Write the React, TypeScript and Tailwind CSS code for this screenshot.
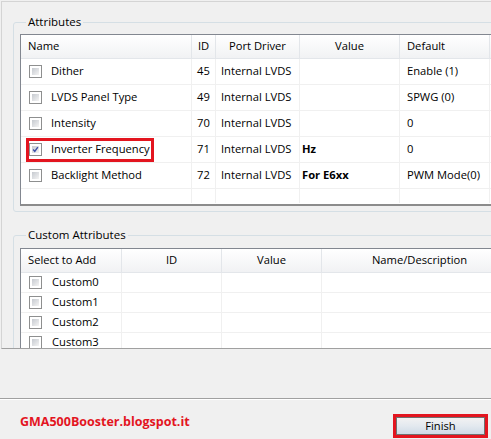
import React from 'react'

const attrs = [
  { name: 'Dither', id: '45', driver: 'Internal LVDS', value: '', def: 'Enable (1)', checked: false },
  { name: 'LVDS Panel Type', id: '49', driver: 'Internal LVDS', value: '', def: 'SPWG (0)', checked: false },
  { name: 'Intensity', id: '70', driver: 'Internal LVDS', value: '', def: '0', checked: false },
  { name: 'Inverter Frequency', id: '71', driver: 'Internal LVDS', value: 'Hz', def: '0', checked: true, marked: true },
  { name: 'Backlight Method', id: '72', driver: 'Internal LVDS', value: 'For E6xx', def: 'PWM Mode(0)', checked: false },
]

const customs = ['Custom0', 'Custom1', 'Custom2', 'Custom3']

function CheckBox({ checked }: { checked?: boolean }) {
  return (
    <div className="w-[13px] h-[13px] border border-[#8e8f8f] bg-white p-[2px] shrink-0">
      <div className="w-full h-full bg-linear-to-br from-[#c6cad0] to-[#f4f4f4] flex items-center justify-center">
        {checked && (
          <svg width="9" height="9" viewBox="0 0 9 9">
            <path d="M1.5 4.5 L3.6 7 L7.5 1.5" fill="none" stroke="#3c4fa8" strokeWidth="1.8" />
          </svg>
        )}
      </div>
    </div>
  )
}

function GroupBox({ title, className, children }: { title: string; className?: string; children: React.ReactNode }) {
  return (
    <fieldset className={`border border-[#d5dfe5] rounded-[3px] w-[600px] ${className ?? ''}`}>
      <legend className="ml-[6px] px-[2px] leading-[16px] text-[11.5px] text-black">{title}</legend>
      {children}
    </fieldset>
  )
}

function HeaderCell({ w, children, center }: { w: string; children?: React.ReactNode; center?: boolean }) {
  return (
    <div className={`${w} h-full border-r border-[#e3e6ea] flex items-center px-[7px] ${center ? 'justify-center' : ''}`}>
      {children}
    </div>
  )
}

export default function App() {
  return (
    <div className="w-[491px] h-[439px] bg-[#f0f0f0] overflow-hidden flex flex-col font-['Open_Sans',sans-serif] text-[11.2px] text-black">
      <div className="h-[348px] mt-[1px] ml-[1px] border-l border-t border-b border-[#d4d4d4] border-b-[#a0a0a0] overflow-hidden shrink-0">
        <GroupBox title="Attributes" className="mt-[12px] ml-[11px] pl-[6px] pt-[4px] pb-[5px]">
          <div className="w-[580px] h-[172px] bg-white border-t border-l border-[#828790] border-b-2 border-b-[#8c8c8c]">
            <div className="flex h-[24px] bg-linear-to-b from-white to-[#f1f2f4] border-b border-[#e3e6ea]">
              <HeaderCell w="w-[171px]">Name</HeaderCell>
              <HeaderCell w="w-[24px]" center>ID</HeaderCell>
              <HeaderCell w="w-[84px]" center>Port Driver</HeaderCell>
              <HeaderCell w="w-[100px]" center>Value</HeaderCell>
              <HeaderCell w="w-[90px]">Default</HeaderCell>
              <div className="flex-1" />
            </div>
            {attrs.map((a) => (
              <div key={a.id} className="flex h-[26px] border-b border-[#f0f0f0]">
                <div className="w-[171px] h-full border-r border-[#f0f0f0] flex items-center gap-[9px] pl-[8px] relative">
                  <CheckBox checked={a.checked} />
                  <span>{a.name}</span>
                  {a.marked && (
                    <div className="absolute left-[5px] top-[1px] w-[128px] h-[24px] border-[3px] border-[#e3151f]" />
                  )}
                </div>
                <div className="w-[24px] h-full border-r border-[#f0f0f0] flex items-center justify-center">{a.id}</div>
                <div className="w-[84px] h-full border-r border-[#f0f0f0] flex items-center pl-[5px]">{a.driver}</div>
                <div className="w-[100px] h-full border-r border-[#f0f0f0] flex items-center pl-[2px] font-bold">{a.value}</div>
                <div className="w-[90px] h-full border-r border-[#f0f0f0] flex items-center pl-[7px]">{a.def}</div>
                <div className="flex-1" />
              </div>
            ))}
            <div className="flex h-[14px]">
              <div className="w-[171px] border-r border-[#f0f0f0]" />
              <div className="w-[24px] border-r border-[#f0f0f0]" />
              <div className="w-[84px] border-r border-[#f0f0f0]" />
              <div className="w-[100px] border-r border-[#f0f0f0]" />
              <div className="w-[90px] border-r border-[#f0f0f0]" />
            </div>
          </div>
        </GroupBox>

        <GroupBox title="Custom Attributes" className="mt-[15px] ml-[11px] pl-[6px] pt-[5px]">
          <div className="w-[580px] bg-white border-t border-l border-[#828790]">
            <div className="flex h-[24px] bg-linear-to-b from-white to-[#f1f2f4] border-b border-[#e3e6ea]">
              <HeaderCell w="w-[101px]">Select to Add</HeaderCell>
              <HeaderCell w="w-[100px]" center>ID</HeaderCell>
              <HeaderCell w="w-[100px]" center>Value</HeaderCell>
              <HeaderCell w="w-[196px]" center>Name/Description</HeaderCell>
              <div className="flex-1" />
            </div>
            {customs.map((c) => (
              <div key={c} className="flex h-[20px] border-b border-[#f0f0f0]">
                <div className="w-[101px] h-full border-r border-[#f0f0f0] flex items-center gap-[10px] pl-[8px]">
                  <CheckBox />
                  <span>{c}</span>
                </div>
                <div className="w-[100px] h-full border-r border-[#f0f0f0]" />
                <div className="w-[100px] h-full border-r border-[#f0f0f0]" />
                <div className="w-[196px] h-full border-r border-[#f0f0f0]" />
                <div className="flex-1" />
              </div>
            ))}
          </div>
        </GroupBox>
      </div>

      <div className="h-[50px] shrink-0 border-b border-[#a0a0a0]" />

      <div className="flex-1 flex items-center justify-between pl-[20px] pr-[3px] border-t border-white">
        <span className="text-[#e3151f] font-bold text-[12.5px] mt-[6px]">GMA500Booster.blogspot.it</span>
        <div className="border-[3px] border-[#e3151f] w-[95px] h-[24px] mt-[13px]">
          <div className="w-full h-full border border-[#707070] bg-linear-to-b from-[#f2f2f2] via-[#e3e9ef] to-[#cfdbe6] flex items-center justify-center">
            Finish
          </div>
        </div>
      </div>
    </div>
  )
}
